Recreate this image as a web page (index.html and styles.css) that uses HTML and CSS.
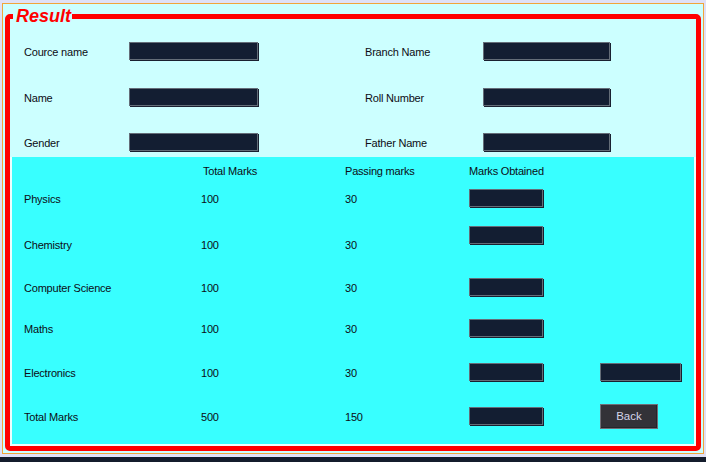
FILE: index.html
```html
<!DOCTYPE html>
<html lang="en">
<head>
<meta charset="utf-8">
<title>Result</title>
<link rel="stylesheet" href="styles.css">
</head>
<body>
<div class="frame">
  <div class="group">
    <span class="legend">Result</span>
    <div class="info">
      <span class="label">Cource name</span>
      <span class="field field-wide"></span>
      <span class="label">Branch Name</span>
      <span class="field field-wide2"></span>

      <span class="label">Name</span>
      <span class="field field-wide"></span>
      <span class="label">Roll Number</span>
      <span class="field field-wide2"></span>

      <span class="label">Gender</span>
      <span class="field field-wide"></span>
      <span class="label">Father Name</span>
      <span class="field field-wide2"></span>
    </div>
    <div class="marks">
      <div class="mrow head">
        <span></span>
        <span class="label indent">Total Marks</span>
        <span class="label">Passing marks</span>
        <span class="label">Marks Obtained</span>
        <span></span>
      </div>
      <div class="mrow gap-9">
        <span class="label">Physics</span>
        <span class="label">100</span>
        <span class="label">30</span>
        <span class="field field-mark"></span>
        <span></span>
      </div>
      <div class="mrow tall gap-18">
        <span class="label">Chemistry</span>
        <span class="label">100</span>
        <span class="label">30</span>
        <span class="field field-mark"></span>
        <span></span>
      </div>
      <div class="mrow gap-14">
        <span class="label">Computer Science</span>
        <span class="label">100</span>
        <span class="label">30</span>
        <span class="field field-mark"></span>
        <span></span>
      </div>
      <div class="mrow gap-22">
        <span class="label">Maths</span>
        <span class="label">100</span>
        <span class="label">30</span>
        <span class="field field-mark"></span>
        <span></span>
      </div>
      <div class="mrow gap-25">
        <span class="label">Electronics</span>
        <span class="label">100</span>
        <span class="label">30</span>
        <span class="field field-mark"></span>
        <span class="field field-extra"></span>
      </div>
      <div class="mrow total gap-22">
        <span class="label">Total Marks</span>
        <span class="label">500</span>
        <span class="label">150</span>
        <span class="field field-mark"></span>
        <button class="back" type="button">Back</button>
      </div>
    </div>
  </div>
</div>
<div class="taskbar"></div>
</body>
</html>
```

FILE: styles.css
```css
* {
  box-sizing: border-box;
}

html, body {
  margin: 0;
  padding: 0;
}

body {
  width: 706px;
  height: 462px;
  overflow: hidden;
  background: #e0e0f6;
  font-family: "Liberation Sans", Arial, sans-serif;
  font-size: 11px;
  letter-spacing: -0.2px;
  color: #0c0c14;
}

.frame {
  margin: 3px 0 0 2px;
  width: 702px;
  height: 451px;
  border: 1px solid #f2a43a;
  background: #ccffff;
  padding: 10px 2px 2px 2px;
}

.group {
  position: relative;
  width: 696px;
  height: 437px;
  border: 5px solid #ff0000;
  border-radius: 5px;
  display: flex;
  flex-direction: column;
}

.legend {
  position: absolute;
  top: -13px;
  left: 3px;
  padding: 0 1px 0 3px;
  background: #ccffff;
  color: #ff0000;
  font-size: 18px;
  font-weight: bold;
  font-style: italic;
  line-height: 21px;
  letter-spacing: 0;
}

.label {
  padding-top: 1px;
  line-height: 19px;
  white-space: nowrap;
}

.field {
  display: block;
  height: 18px;
  background: #131e32;
  border: 1px solid #646d78;
  box-shadow: 1px 1px 0 #1a2030;
}

.field-wide {
  width: 129px;
}

.field-wide2 {
  width: 127px;
}

.field-mark {
  width: 74px;
}

.field-extra {
  width: 81px;
}

/* upper info panel */
.info {
  height: 138px;
  padding: 23px 0 0 14px;
  display: grid;
  grid-template-columns: 105px 236px 118px 1fr;
  grid-template-rows: 46px 45px 19px;
  align-items: start;
}

/* lower marks panel */
.marks {
  flex: 1;
  background: #38ffff;
  border: 2px solid #effffe;
  border-top: none;
  padding: 4px 0 0 12px;
  display: flex;
  flex-direction: column;
}

.mrow {
  display: grid;
  grid-template-columns: 177px 144px 124px 131px 1fr;
  height: 19px;
  align-items: start;
}

.indent {
  padding-left: 2px;
}

.gap-9 { margin-top: 9px; }
.gap-14 { margin-top: 14px; }
.gap-18 { margin-top: 18px; }
.gap-22 { margin-top: 22px; }
.gap-25 { margin-top: 25px; }

.mrow.tall {
  height: 38px;
}

.mrow.tall .label {
  padding-top: 0;
  line-height: 38px;
}

.mrow.total {
  height: 25px;
}

.mrow.total .label {
  line-height: 25px;
}

.mrow.total .field {
  margin-top: 3px;
}

.back {
  width: 58px;
  height: 25px;
  margin: 0;
  padding: 0 0 1px 0;
  background: #333238;
  border: 1px solid #6e6e76;
  box-shadow: inset -1px -1px 0 #26252a;
  color: #d4d4e8;
  font-family: "Liberation Sans", Arial, sans-serif;
  font-size: 11.5px;
  letter-spacing: 0;
  text-align: center;
}

.taskbar {
  margin-top: 3px;
  height: 5px;
  background: #141c2c;
}
```
